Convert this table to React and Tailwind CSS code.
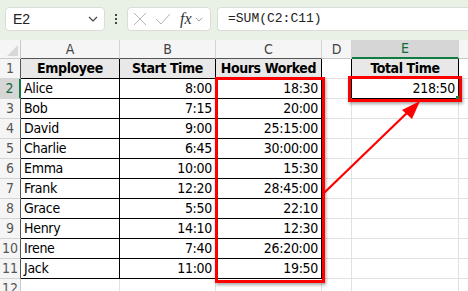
import React from "react";

const cellFont = { fontFamily: '"Liberation Sans Narrow", "DejaVu Sans Condensed", "Liberation Sans", sans-serif' };

const data = [
  ["Alice", "8:00", "18:30"],
  ["Bob", "7:15", "20:00"],
  ["David", "9:00", "25:15:00"],
  ["Charlie", "6:45", "30:00:00"],
  ["Emma", "10:00", "15:30"],
  ["Frank", "12:20", "28:45:00"],
  ["Grace", "5:50", "22:10"],
  ["Henry", "14:10", "12:30"],
  ["Irene", "7:40", "26:20:00"],
  ["Jack", "11:00", "19:50"],
];

const Chevron = ({ className }) => (
  <svg viewBox="0 0 10 6" className={className} fill="none" stroke="currentColor" strokeWidth="1.2">
    <path d="M1 1l4 4 4-4" />
  </svg>
);

function Toolbar() {
  return (
    <div className="h-[40px] bg-[#e9f0e5] flex items-start pt-[7px] pl-[5px] gap-0">
      <div className="w-[100px] h-[24px] bg-white rounded-[4px] border border-[#dcdcdc] flex items-center pl-[7px] pr-[6px] text-[14px] text-[#222]" style={{ fontFamily: '"Liberation Sans", sans-serif' }}>
        <span>E2</span>
        <Chevron className="ml-auto w-[10px] h-[6px] text-[#444]" />
      </div>
      <div className="w-[22px] h-[24px] flex flex-col items-center justify-center gap-[2px]">
        <span className="w-[2px] h-[2px] bg-[#444]" />
        <span className="w-[2px] h-[2px] bg-[#444]" />
        <span className="w-[2px] h-[2px] bg-[#444]" />
      </div>
      <div className="w-[84px] h-[24px] bg-white rounded-[4px] border border-[#dcdcdc] flex items-center pl-[5px]">
        <svg viewBox="0 0 14 14" className="w-[14px] h-[14px] text-[#b5b5b5]" fill="none" stroke="currentColor" strokeWidth="1">
          <path d="M1 1l12 12M13 1L1 13" />
        </svg>
        <svg viewBox="0 0 16 12" className="ml-[8px] w-[16px] h-[12px] text-[#b5b5b5]" fill="none" stroke="currentColor" strokeWidth="1">
          <path d="M1 6l5 5L15 1" />
        </svg>
        <span className="ml-[9px] text-[16px] italic text-[#333] leading-none" style={{ fontFamily: '"Liberation Serif", serif' }}>fx</span>
        <Chevron className="ml-[3px] w-[8px] h-[5px] text-[#999]" />
      </div>
      <div className="ml-[6px] flex-1 h-[24px] bg-white rounded-l-[4px] border border-r-0 border-[#dcdcdc] flex items-center pl-[10px] text-[13px] text-[#222]" style={{ fontFamily: '"Liberation Mono", monospace' }}>
        =SUM(C2:C11)
      </div>
    </div>
  );
}

function HeaderRow() {
  const letter = "flex items-center justify-center text-[14px] text-[#444] bg-[#f5f5f5] border-r border-[#d4d4d4]";
  return (
    <>
      <div className="relative bg-[#f5f5f5] border-r border-b border-[#c8c8c8]">
        <div className="absolute right-[2px] bottom-[2px] w-0 h-0 border-l-[11px] border-l-transparent border-b-[11px] border-b-[#d8d8d8]" />
      </div>
      <div className={`${letter} border-b border-b-[#555]`}>A</div>
      <div className={`${letter} border-b border-b-[#555]`}>B</div>
      <div className={`${letter} border-b border-b-[#555]`}>C</div>
      <div className={`${letter} border-b border-b-[#c8c8c8]`}>D</div>
      <div className="flex items-center justify-center text-[14px] text-[#0e6b3a] bg-[#d6d6d6] border-r border-[#d4d4d4] border-b-2 border-b-[#107c41]">E</div>
      <div className="bg-[#f5f5f5] border-b border-[#c8c8c8]" />
    </>
  );
}

function BodyRow({ r }) {
  const inTable = r <= 11;
  const row = data[r - 2];
  const rowHead =
    r === 2
      ? "flex items-center justify-center text-[14px] text-[#0e6b3a] bg-[#d6d6d6] border-b border-[#d4d4d4] border-r-2 border-r-[#107c41]"
      : inTable
      ? "flex items-center justify-center text-[14px] text-[#555] bg-[#f5f5f5] border-b border-[#d4d4d4] border-r border-r-[#555]"
      : "flex items-center justify-center text-[14px] text-[#555] bg-[#f5f5f5] border-b border-[#d4d4d4] border-r border-r-[#c8c8c8]";
  const tCell = "flex items-center whitespace-nowrap px-[3px] text-[14px] tracking-[-0.3px] text-black border-r border-b border-black";
  const tHead = "flex items-center justify-center whitespace-nowrap text-[14px] tracking-[-0.4px] font-bold text-black bg-[#e8e8e8] border-r border-b border-black";
  const gCell = "border-r border-b border-[#e1e1e1]";

  return (
    <>
      <div className={rowHead}>{r}</div>
      {r === 1 ? (
        <>
          <div className={tHead}>Employee</div>
          <div className={tHead}>Start Time</div>
          <div className={tHead}>Hours Worked</div>
        </>
      ) : inTable ? (
        <>
          <div className={tCell}>{row[0]}</div>
          <div className={`${tCell} justify-end`}>{row[1]}</div>
          <div className={`${tCell} justify-end`}>{row[2]}</div>
        </>
      ) : (
        <>
          <div className={gCell} />
          <div className={gCell} />
          <div className={gCell} />
        </>
      )}
      <div className={r <= 2 ? "border-b border-[#e1e1e1] border-r border-r-black" : gCell} />
      {r === 1 ? (
        <div className={tHead}>Total Time</div>
      ) : r === 2 ? (
        <div className={`${tCell} justify-end relative`}>
          218:50
          <div className="absolute right-[-2px] bottom-[-2px] w-[4px] h-[4px] bg-[#107c41]" />
        </div>
      ) : (
        <div className={gCell} />
      )}
      <div className="border-b border-[#e1e1e1]" />
    </>
  );
}

export default function App() {
  return (
    <div className="relative w-[468px] h-[291px] overflow-hidden bg-white">
      <Toolbar />
      <div className="grid grid-cols-[21px_99px_96px_106px_30px_107px_1fr] grid-rows-[19px_repeat(12,20px)]" style={cellFont}>
        <HeaderRow />
        {[1, 2, 3, 4, 5, 6, 7, 8, 9, 10, 11, 12].map((r) => (
          <BodyRow key={r} r={r} />
        ))}
      </div>

      {/* red callouts */}
      <div className="absolute left-[215px] top-[77px] w-[110px] h-[206px] border-[3px] border-[#ff0000] shadow-[1px_2px_3px_rgba(0,0,0,0.35)]" />
      <div className="absolute left-[348px] top-[76px] w-[114px] h-[26px] border-[3px] border-[#ff0000] shadow-[1px_2px_3px_rgba(0,0,0,0.35)]" />
      <svg className="absolute left-0 top-0 w-[468px] h-[291px] pointer-events-none" viewBox="0 0 468 291">
        <line x1="324" y1="193" x2="410" y2="110" stroke="#ff0000" strokeWidth="2.2" />
        <polygon points="420,101 402,110 412,119" fill="#ff0000" />
      </svg>
    </div>
  );
}
